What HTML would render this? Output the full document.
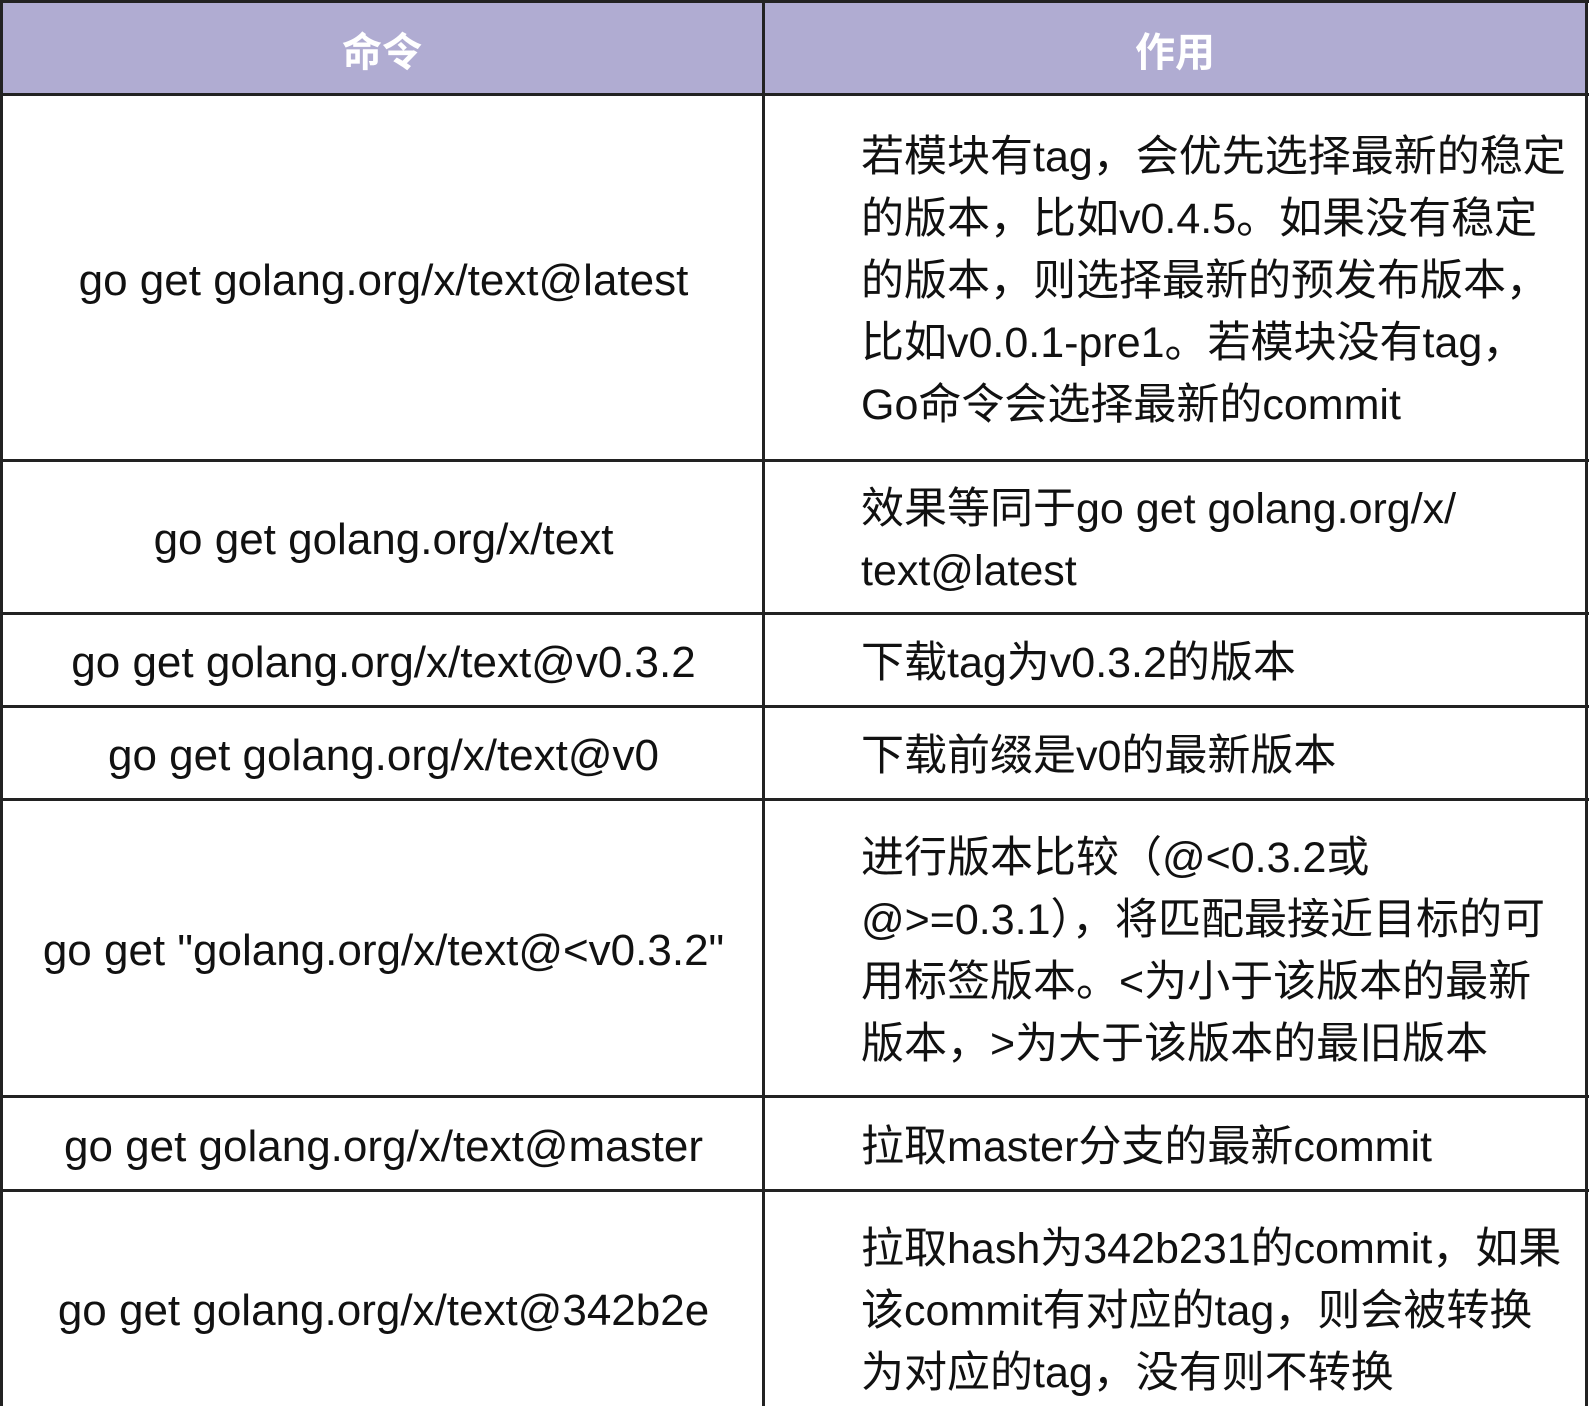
<!DOCTYPE html>
<html><head><meta charset="utf-8"><style>
*{margin:0;padding:0;box-sizing:border-box}
body{width:1589px;height:1406px;background:#fff;overflow:hidden;position:relative;font-family:"Liberation Sans","Noto Sans CJK SC",sans-serif;color:#111}
.hdr{position:absolute;left:2px;top:2px;width:1584px;height:93px;background:#b0acd2}
.h{position:absolute;top:2px;height:93px;display:flex;align-items:center;justify-content:center;color:#fff;font-weight:bold;font-size:40px}
.hl{position:absolute;left:0;width:1589px;height:3px;background:#222}
.vl{position:absolute;top:0;width:3px;height:1406px;background:#222}
.c{position:absolute;display:flex;align-items:center;font-size:43px;line-height:62px;white-space:nowrap;padding-top:6px}
.l{left:3px;width:761px;justify-content:center;text-align:center;font-size:44px}
.r{left:861px;width:725px}
</style></head><body>
<div class="hdr"></div>
<div class="h" style="left:0;width:764px">命令</div>
<div class="h" style="left:764px;width:822px">作用</div>
<div class="hl" style="top:0"></div>
<div class="hl" style="top:93px"></div>
<div class="hl" style="top:459px"></div>
<div class="hl" style="top:612px"></div>
<div class="hl" style="top:705px"></div>
<div class="hl" style="top:798px"></div>
<div class="hl" style="top:1095px"></div>
<div class="hl" style="top:1189px"></div>
<div class="vl" style="left:0"></div>
<div class="vl" style="left:762px"></div>
<div class="vl" style="left:1585px"></div>

<div class="c l" style="top:96px;height:363px">go get golang.org/x/text@latest</div>
<div class="c r" style="top:96px;height:363px"><div>若模块有tag，会优先选择最新的稳定<br>的版本，比如v0.4.5。如果没有稳定<br>的版本，则选择最新的预发布版本，<br>比如v0.0.1-pre1。若模块没有tag，<br>Go命令会选择最新的commit</div></div>

<div class="c l" style="top:462px;height:150px">go get golang.org/x/text</div>
<div class="c r" style="top:462px;height:150px"><div>效果等同于go get golang.org/x/<br>text@latest</div></div>

<div class="c l" style="top:615px;height:90px">go get golang.org/x/text@v0.3.2</div>
<div class="c r" style="top:615px;height:90px">下载tag为v0.3.2的版本</div>

<div class="c l" style="top:708px;height:90px">go get golang.org/x/text@v0</div>
<div class="c r" style="top:708px;height:90px">下载前缀是v0的最新版本</div>

<div class="c l" style="top:801px;height:294px">go get "golang.org/x/text@&lt;v0.3.2"</div>
<div class="c r" style="top:801px;height:294px"><div>进行版本比较（@&lt;0.3.2或<br>@&gt;=0.3.1），将匹配最接近目标的可<br>用标签版本。&lt;为小于该版本的最新<br>版本，&gt;为大于该版本的最旧版本</div></div>

<div class="c l" style="top:1098px;height:91px">go get golang.org/x/text@master</div>
<div class="c r" style="top:1098px;height:91px">拉取master分支的最新commit</div>

<div class="c l" style="top:1192px;height:232px">go get golang.org/x/text@342b2e</div>
<div class="c r" style="top:1192px;height:232px"><div>拉取hash为342b231的commit，如果<br>该commit有对应的tag，则会被转换<br>为对应的tag，没有则不转换</div></div>
</body></html>
